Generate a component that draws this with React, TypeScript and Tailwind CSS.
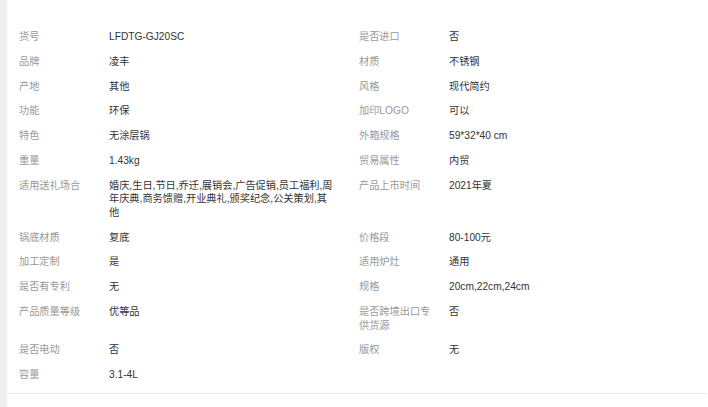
import React from "react";

const rows: [string, string, string, string][] = [
  ["货号", "LFDTG-GJ20SC", "是否进口", "否"],
  ["品牌", "凌丰", "材质", "不锈钢"],
  ["产地", "其他", "风格", "现代简约"],
  ["功能", "环保", "加印LOGO", "可以"],
  ["特色", "无涂层锅", "外箱规格", "59*32*40 cm"],
  ["重量", "1.43kg", "贸易属性", "内贸"],
  [
    "适用送礼场合",
    "婚庆,生日,节日,乔迁,展销会,广告促销,员工福利,周年庆典,商务馈赠,开业典礼,颁奖纪念,公关策划,其他",
    "产品上市时间",
    "2021年夏",
  ],
  ["锅底材质", "复底", "价格段", "80-100元"],
  ["加工定制", "是", "适用炉灶", "通用"],
  ["是否有专利", "无", "规格", "20cm,22cm,24cm"],
  ["产品质量等级", "优等品", "是否跨境出口专供货源", "否"],
  ["是否电动", "否", "版权", "无"],
  ["容量", "3.1-4L", "", ""],
];

export default function App() {
  return (
    <div
      className="flex w-[708px] h-[407px] bg-white overflow-hidden"
      style={{ fontFamily: '"Liberation Sans", Arial, "Noto Sans CJK SC", sans-serif' }}
    >
      <div className="w-[7px] shrink-0 bg-[#efefef]" />
      <div className="w-[700px] shrink-0 self-start pt-[24.4px] pb-[5.4px] border-b border-[#e6e6e6]">
        <div className="grid grid-cols-[90px_250px_90px_1fr] pl-[12px] text-[10.2px] leading-[13.6px]">
          {rows.map((r, i) => (
            <React.Fragment key={i}>
              <div className="py-[5.6px] pr-[12px] text-[#999]">{r[0]}</div>
              <div className="py-[5.6px] text-[#333]">
                <div className="w-[226px]">{r[1]}</div>
              </div>
              <div className="py-[5.6px] pr-[12px] text-[#999]">{r[2]}</div>
              <div className="py-[5.6px] text-[#333]">{r[3]}</div>
            </React.Fragment>
          ))}
        </div>
      </div>
    </div>
  );
}
